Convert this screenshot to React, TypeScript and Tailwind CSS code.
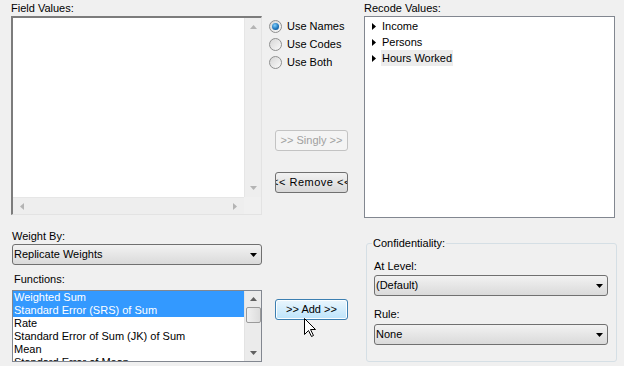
import React from "react";

const font = { fontFamily: '"Liberation Sans", Arial, sans-serif' };

function Tri({ dir, color = "#000" }: { dir: "up" | "down" | "left" | "right"; color?: string }) {
  const pts =
    dir === "up"
      ? "0,4 3.5,0 7,4"
      : dir === "down"
      ? "0,0 7,0 3.5,4"
      : dir === "left"
      ? "4,0 4,7 0,3.5"
      : "0,0 0,7 4,3.5";
  const w = dir === "up" || dir === "down" ? 7 : 4;
  const h = dir === "up" || dir === "down" ? 4 : 7;
  return (
    <svg width={w} height={h} viewBox={`0 0 ${w} ${h}`} className="block">
      <polygon points={pts} fill={color} />
    </svg>
  );
}

function Select({ value, w }: { value: string; w: string }) {
  return (
    <div
      className={`${w} h-[21px] flex items-center justify-between rounded-[3px] border border-[#707070] bg-gradient-to-b from-[#f2f2f2] to-[#dadada] pl-[1px] pr-[4px] text-[11px] text-black`}
    >
      <span className="leading-[13px]">{value}</span>
      <Tri dir="down" />
    </div>
  );
}

function Radio({ checked, label }: { checked?: boolean; label: string }) {
  return (
    <div className="flex items-center h-[18px]">
      <div className="w-[13px] h-[13px] rounded-full border border-[#8e8f8f] bg-gradient-to-br from-[#d6d6d6] to-[#fafafa] flex items-center justify-center">
        {checked && (
          <div className="w-[7px] h-[7px] rounded-full bg-[radial-gradient(circle_at_40%_35%,#7fd0ff,#1a6fb5_60%,#0d4d8a)]" />
        )}
      </div>
      <span className="ml-[5px] text-[11px] leading-[18px] text-black">{label}</span>
    </div>
  );
}

export default function App() {
  const funcs = [
    "Weighted Sum",
    "Standard Error (SRS) of Sum",
    "Rate",
    "Standard Error of Sum (JK) of Sum",
    "Mean",
    "Standard Error of Mean",
  ];
  return (
    <div className="w-[624px] h-[366px] bg-[#f0f0f0] relative overflow-hidden text-black" style={font}>
      {/* top row */}
      <div className="flex h-[218px]">
        {/* Field values */}
        <div className="ml-[11px] w-[251px] flex flex-col pt-[1px]">
          <div className="text-[11px] leading-[15px] h-[15px]">Field Values:</div>
          <div className="h-[199px] border-t-2 border-l-2 border-t-[#7c7c7c] border-l-[#7c7c7c] border-r border-b border-r-[#e3e3e3] border-b-[#e3e3e3] bg-white flex flex-col">
            <div className="flex flex-1">
              <div className="flex-1 bg-white" />
              <div className="w-[17px] bg-[#eeeeee] border-l border-[#e6e6e6] flex flex-col items-center justify-between py-[7px]">
                <Tri dir="up" color="#b4b4b4" />
                <Tri dir="down" color="#b4b4b4" />
              </div>
            </div>
            <div className="flex h-[17px]">
              <div className="flex-1 bg-[#eeeeee] border-t border-[#e6e6e6] flex items-center justify-between px-[7px]">
                <Tri dir="left" color="#b4b4b4" />
                <Tri dir="right" color="#b4b4b4" />
              </div>
              <div className="w-[17px] bg-[#f0f0f0]" />
            </div>
          </div>
        </div>

        {/* middle controls */}
        <div className="w-[102px] flex flex-col">
          <div className="ml-[7px] mt-[17px] flex flex-col">
            <Radio checked label="Use Names" />
            <Radio label="Use Codes" />
            <Radio label="Use Both" />
          </div>
          <div className="ml-[13px] mt-[59px] w-[73px] h-[21px] rounded-[3px] border border-[#c3c3c3] bg-[#f4f4f4] flex items-center justify-center text-[11px] text-[#a0a0a0] whitespace-nowrap">
            &gt;&gt; Singly &gt;&gt;
          </div>
          <div className="ml-[13px] mt-[21px] w-[73px] h-[21px] rounded-[3px] border border-[#707070] bg-gradient-to-b from-[#f2f2f2] to-[#d8d8d8] flex items-center justify-center overflow-hidden text-[11px] text-black whitespace-nowrap tracking-[0.5px]">
            &lt;&lt; Remove &lt;&lt;
          </div>
        </div>

        {/* Recode values */}
        <div className="w-[251px] flex flex-col pt-[1px]">
          <div className="text-[11px] leading-[15px] h-[15px]">Recode Values:</div>
          <div className="h-[202px] border border-[#828790] bg-white pt-[1px] flex flex-col">
            {["Income", "Persons", "Hours Worked"].map((t, i) => (
              <div key={t} className="flex items-center h-[16px] pl-[7px]">
                <Tri dir="right" />
                <span
                  className={`ml-[5px] px-[1px] text-[11px] leading-[16px] ${i === 2 ? "bg-[#ececec]" : ""}`}
                >
                  {t}
                </span>
              </div>
            ))}
          </div>
        </div>
      </div>

      {/* bottom row */}
      <div className="flex">
        <div className="ml-[12px] w-[250px] flex flex-col">
          <div className="mt-[11px] text-[11px] leading-[14px] h-[14px]">Weight By:</div>
          <div className="mt-[1px]">
            <Select value="Replicate Weights" w="w-[250px]" />
          </div>
          <div className="mt-[7px] ml-[2px] text-[11px] leading-[14px] h-[14px]">Functions:</div>
          <div className="mt-[4px] h-[72px] border border-[#828790] bg-white flex overflow-hidden">
            <div className="flex-1 flex flex-col overflow-hidden">
              {funcs.map((f, i) => (
                <div
                  key={f}
                  className={`h-[13px] shrink-0 pl-[1px] text-[11px] leading-[13px] whitespace-nowrap ${
                    i < 2 ? "bg-[#3399ff] text-white" : "text-black"
                  }`}
                >
                  {f}
                </div>
              ))}
            </div>
            <div className="w-[17px] bg-[#ebebeb] border-l border-[#e3e3e3] flex flex-col items-center">
              <div className="mt-[6px]">
                <Tri dir="up" color="#606060" />
              </div>
              <div className="mt-[6px] w-[15px] h-[16px] rounded-[2px] border border-[#9a9a9a] bg-gradient-to-r from-[#f0f0f0] to-[#dcdcdc]" />
              <div className="mt-auto mb-[6px]">
                <Tri dir="down" color="#606060" />
              </div>
            </div>
          </div>
        </div>

        <div className="ml-[13px] mt-[81px]">
          <div className="w-[73px] h-[21px] rounded-[3px] border border-[#3c7fb1] bg-gradient-to-b from-[#eaf6fd] to-[#bde4fb] flex items-center justify-center text-[11px] text-black whitespace-nowrap shadow-[inset_0_0_0_1px_#fcfeff]">
            &gt;&gt; Add &gt;&gt;
          </div>
        </div>

        <fieldset className="ml-[18px] mt-[18px] w-[251px] h-[126px] border border-[#d5dfe5] rounded-[3px] px-[7px]">
          <legend className="-ml-[2px] px-[1px] text-[11px] leading-[14px]">Confidentiality:</legend>
          <div className="mt-[9px] text-[11px] leading-[14px] h-[14px]">At Level:</div>
          <div className="mt-[2px]">
            <Select value="(Default)" w="w-[234px]" />
          </div>
          <div className="mt-[11px] text-[11px] leading-[14px] h-[14px]">Rule:</div>
          <div className="mt-[3px]">
            <Select value="None" w="w-[234px]" />
          </div>
        </fieldset>
      </div>

      {/* mouse cursor */}
      <svg width="13" height="20" viewBox="0 0 13 20" className="absolute left-[304px] top-[318px]">
        <polygon
          points="0.5,0.5 0.5,16.5 4.5,12.5 7.5,18.5 9.5,17.5 6.5,11.5 11.5,11.5"
          fill="#fff"
          stroke="#000"
          strokeWidth="1"
          strokeLinejoin="miter"
        />
      </svg>
    </div>
  );
}
